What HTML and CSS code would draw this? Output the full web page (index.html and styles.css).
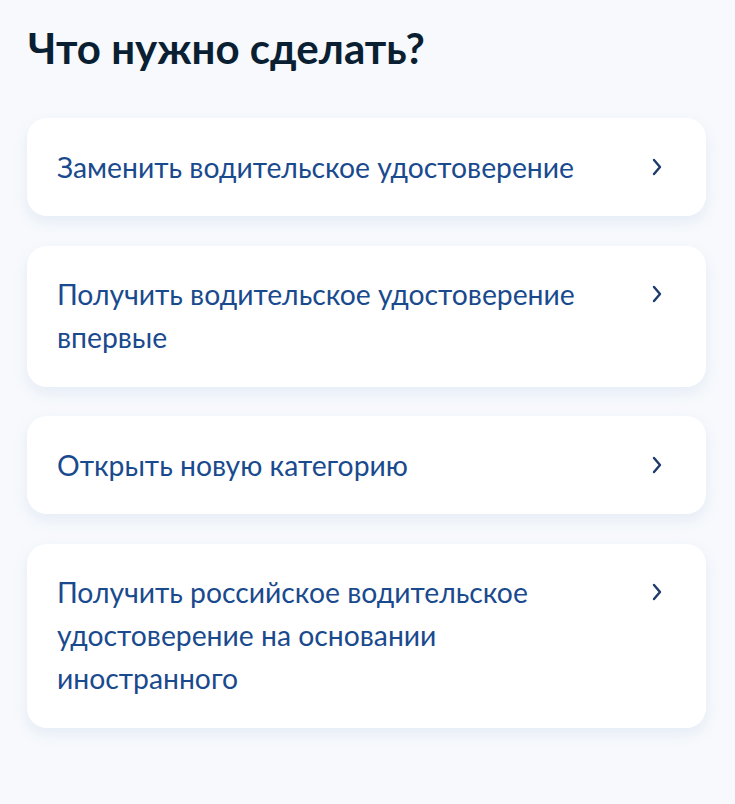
FILE: index.html
```html
<!DOCTYPE html>
<html lang="ru">
<head>
    <meta charset="UTF-8">
    <meta name="viewport" content="width=device-width, initial-scale=1.0">
    <title>Что нужно сделать?</title>
    <link rel="stylesheet" href="styles.css">
</head>
<body>

    <div class="page">
        <h1>Что нужно сделать?</h1>

        <!-- Список услуг -->
        <div class="options">
            <a class="option" href="#">
                <span class="option-text">Заменить водительское удостоверение</span>
                <svg class="chevron" viewBox="0 0 10 18"><path d="M2 2l6 7-6 7"/></svg>
            </a>
            <a class="option" href="#">
                <span class="option-text">Получить водительское удостоверение впервые</span>
                <svg class="chevron" viewBox="0 0 10 18"><path d="M2 2l6 7-6 7"/></svg>
            </a>
            <a class="option" href="#">
                <span class="option-text">Открыть новую категорию</span>
                <svg class="chevron" viewBox="0 0 10 18"><path d="M2 2l6 7-6 7"/></svg>
            </a>
            <a class="option" href="#">
                <span class="option-text">Получить российское водительское удостоверение на основании иностранного</span>
                <svg class="chevron" viewBox="0 0 10 18"><path d="M2 2l6 7-6 7"/></svg>
            </a>
        </div>
    </div>

</body>
</html>
```

FILE: styles.css
```css
/* Global styles */
body {
    font-family: Lato, "Open Sans", sans-serif;
    background-color: #f7f9fc;
    margin: 0;
}

.page {
    padding: 22px 29px 40px 27px;
}

h1 {
    font-size: 42px;
    font-weight: 700;
    color: #0b1f33;
    margin: 0 0 44px 1px;
    line-height: 52px;
}

.options {
    display: flex;
    flex-direction: column;
    gap: 29.5px;
}

/* Card */
.option {
    display: flex;
    align-items: flex-start;
    justify-content: space-between;
    background-color: #fff;
    border-radius: 20px;
    padding: 27.5px 44px 27.5px 30px;
    box-shadow: 0 6px 14px rgba(170, 190, 225, 0.22);
    text-decoration: none;
}

.option-text {
    font-size: 28.3px;
    line-height: 43px;
    color: #1a4a8e;
    max-width: 540px;
}

.chevron {
    width: 10px;
    height: 18px;
    margin-top: 12px;
    flex-shrink: 0;
    fill: none;
    stroke: #1d3a6b;
    stroke-width: 2.4;
    stroke-linecap: round;
    stroke-linejoin: round;
}
```
